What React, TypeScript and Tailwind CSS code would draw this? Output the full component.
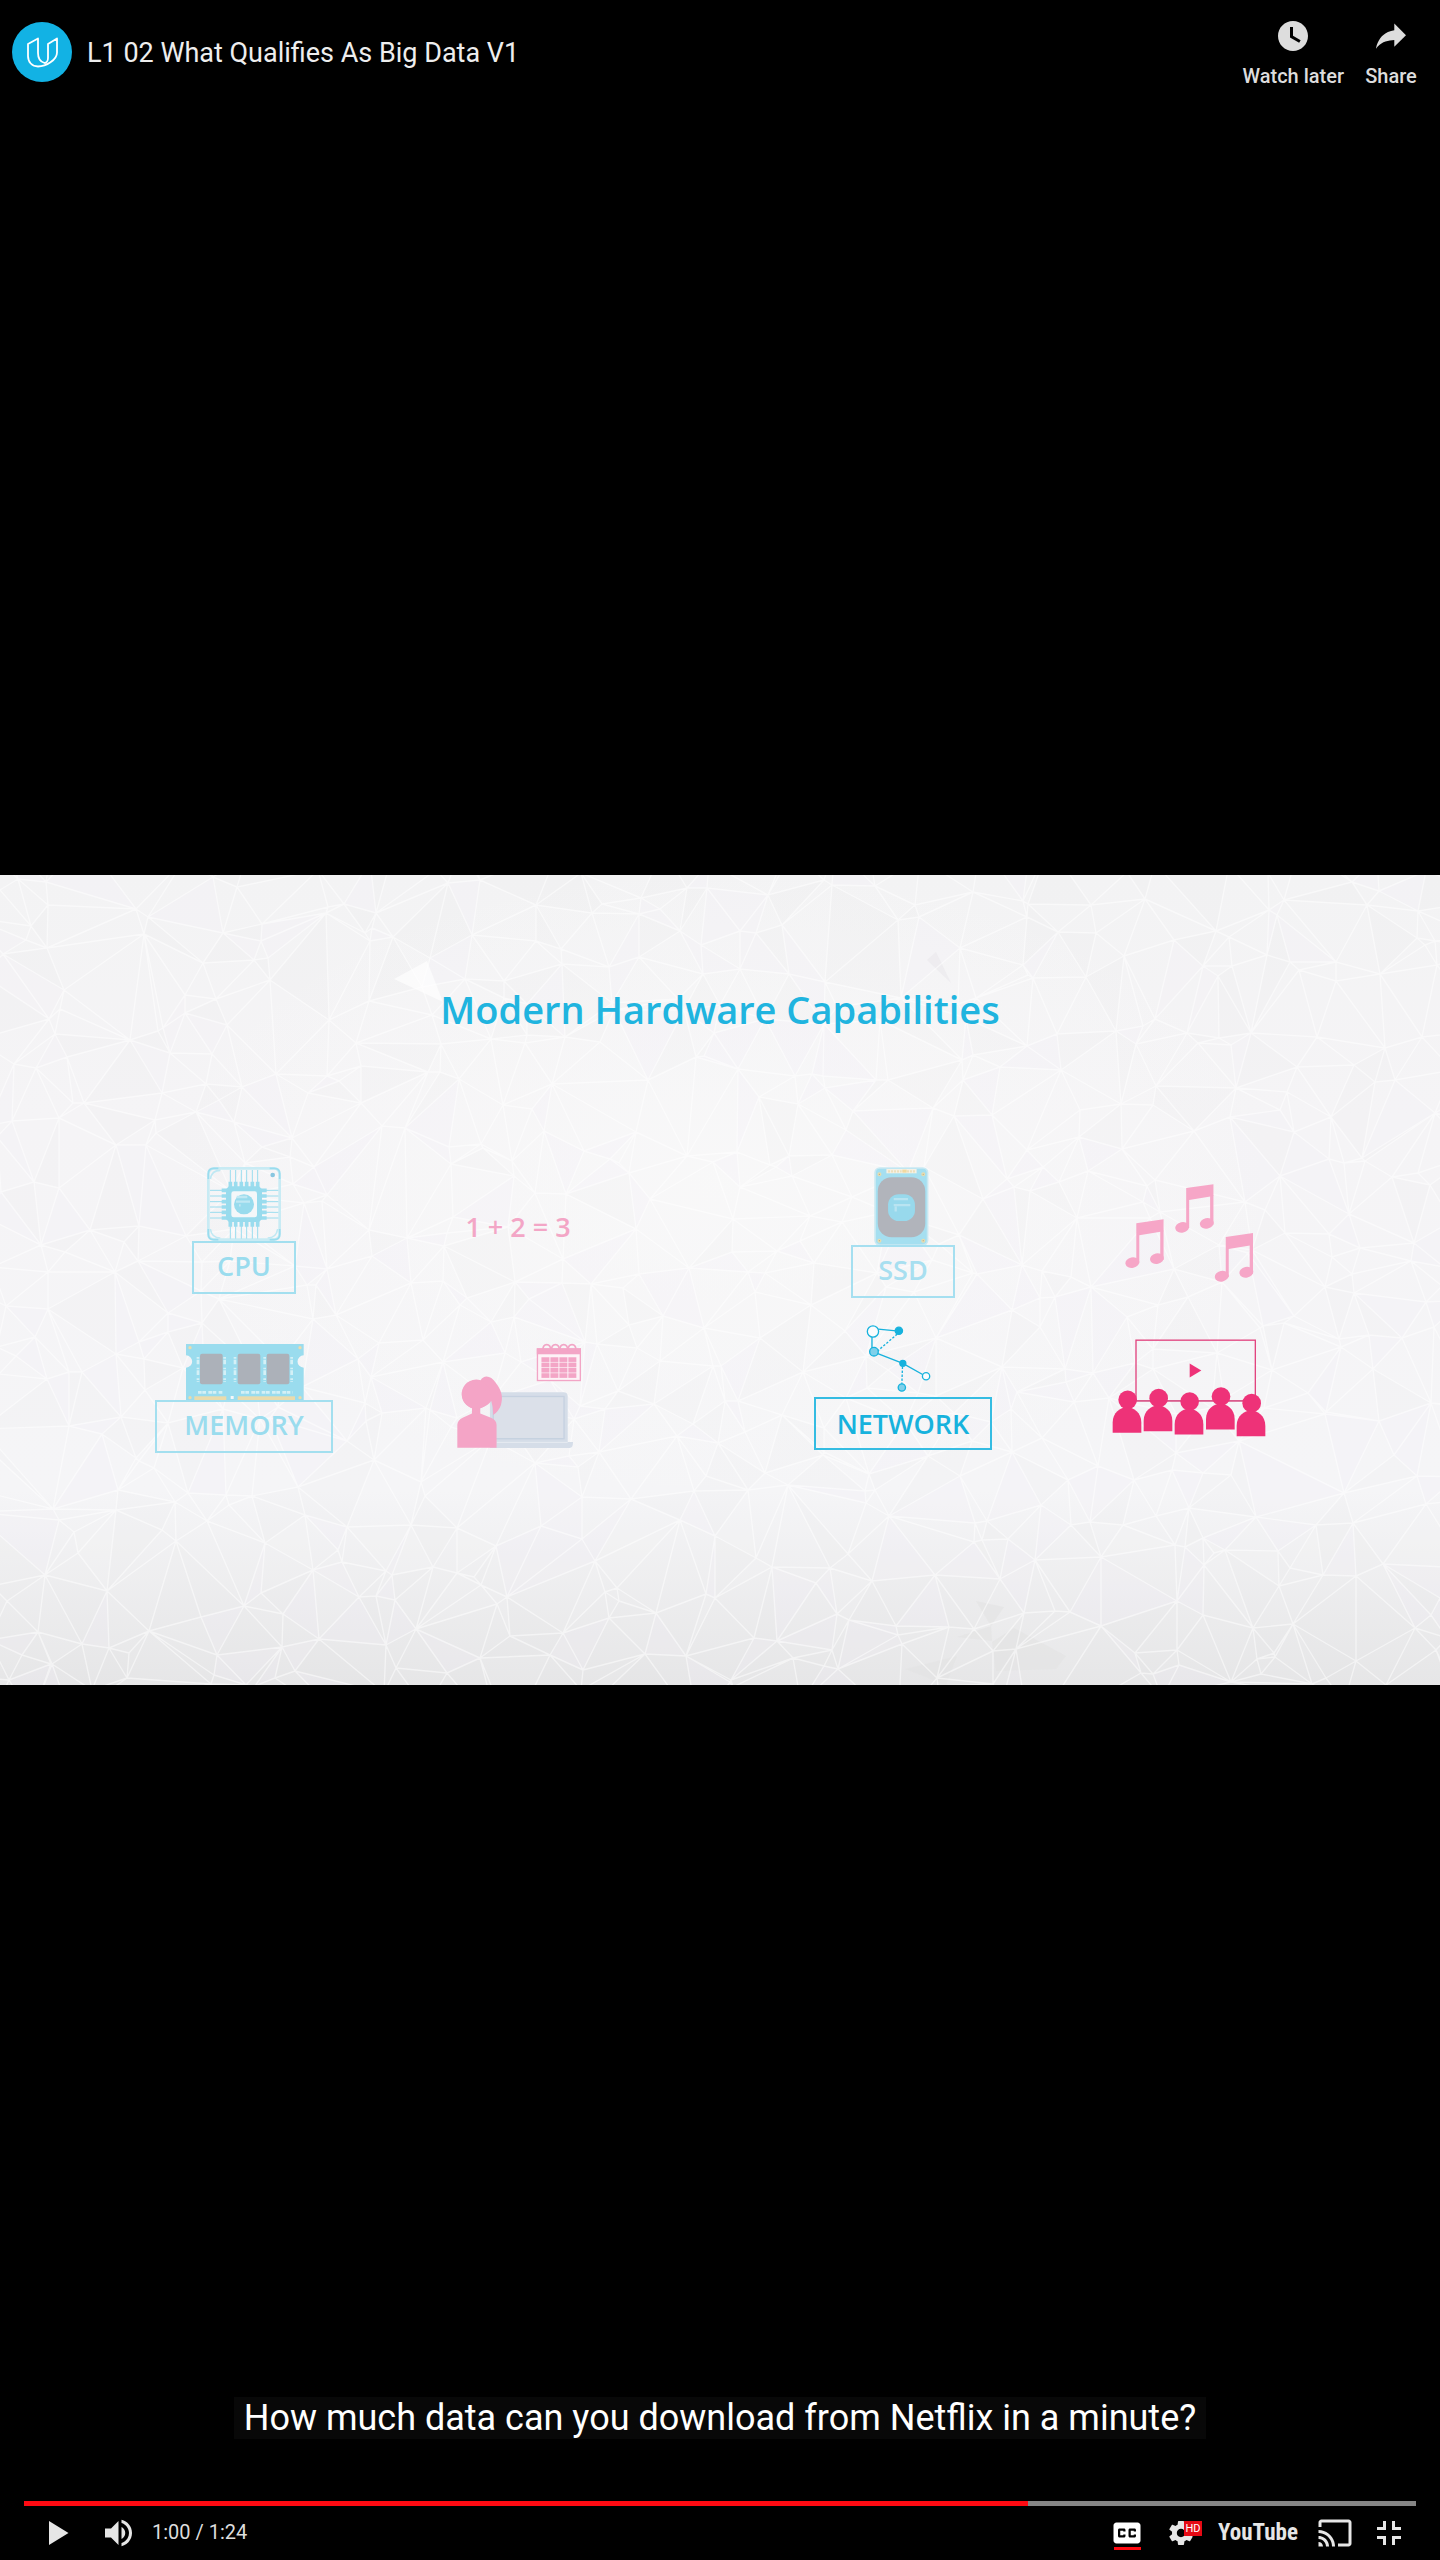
import React from "react";

type Pt = [number, number];
type Tri = [number, number, number];

const SLIDE_W = 1440;
const SLIDE_H = 810;

function makeRandom(seed: number) {
  let s = seed;
  return () => {
    s = (s * 1664525 + 1013904223) % 4294967296;
    return s / 4294967296;
  };
}

/* Bowyer–Watson triangulation */
function triangulate(points: Pt[]): Tri[] {
  const n = points.length;
  const all: Pt[] = [...points, [-9000, -9000], [12000, -9000], [700, 15000]];
  const circle = (t: Tri) => {
    const [ax, ay] = all[t[0]];
    const [bx, by] = all[t[1]];
    const [cx, cy] = all[t[2]];
    const d = 2 * (ax * (by - cy) + bx * (cy - ay) + cx * (ay - by));
    const a2 = ax * ax + ay * ay;
    const b2 = bx * bx + by * by;
    const c2 = cx * cx + cy * cy;
    const x = (a2 * (by - cy) + b2 * (cy - ay) + c2 * (ay - by)) / d;
    const y = (a2 * (cx - bx) + b2 * (ax - cx) + c2 * (bx - ax)) / d;
    return { t, x, y, r: (ax - x) ** 2 + (ay - y) ** 2 };
  };
  let tris = [circle([n, n + 1, n + 2])];
  for (let i = 0; i < n; i++) {
    const [px, py] = all[i];
    const edges = new Map<string, [number, number]>();
    const keep: typeof tris = [];
    for (const c of tris) {
      if ((px - c.x) ** 2 + (py - c.y) ** 2 < c.r) {
        for (let k = 0; k < 3; k++) {
          const a = c.t[k];
          const b = c.t[(k + 1) % 3];
          const key = a < b ? a + "_" + b : b + "_" + a;
          if (edges.has(key)) edges.delete(key);
          else edges.set(key, [a, b]);
        }
      } else keep.push(c);
    }
    edges.forEach(([a, b]) => keep.push(circle([a, b, i])));
    tris = keep;
  }
  return tris.map((c) => c.t).filter((t) => t.every((v) => v < n));
}

function buildMesh() {
  const rnd = makeRandom(77);
  const points: Pt[] = [];
  const step = 41;
  for (let y = -step; y <= SLIDE_H + step; y += step) {
    for (let x = -step; x <= SLIDE_W + step; x += step) {
      points.push([Math.round(x + (rnd() - 0.5) * 84), Math.round(y + (rnd() - 0.5) * 84)]);
    }
  }
  const tris = triangulate(points);
  let lines = "";
  const fills = ["", "", ""];
  for (const t of tris) {
    const d = "M" + t.map((v) => points[v].join(" ")).join("L") + "Z";
    lines += d;
    const pick = Math.floor(rnd() * 6);
    if (pick < 3) fills[pick] += d;
  }
  return { lines, fills };
}

const mesh = buildMesh();

function MeshBackground() {
  return (
    <svg
      className="absolute inset-0 h-full w-full"
      viewBox="0 0 1440 810"
      preserveAspectRatio="xMidYMid slice"
      aria-hidden="true"
    >
      <defs>
        <linearGradient id="floor" x1="0" y1="0" x2="0" y2="1">
          <stop offset="0" stopColor="#f3f3f4" />
          <stop offset="0.3" stopColor="#f5f4f6" />
          <stop offset="0.76" stopColor="#f5f5f7" />
          <stop offset="1" stopColor="#e6e6e7" />
        </linearGradient>
        <radialGradient id="glow" cx="0.5" cy="0.38" r="0.4">
          <stop offset="0" stopColor="#f9f9f9" stopOpacity="0.8" />
          <stop offset="1" stopColor="#f9f9f9" stopOpacity="0" />
        </radialGradient>
      </defs>
      <rect width="1440" height="810" fill="url(#floor)" />
      <rect width="1440" height="810" fill="url(#glow)" />
      <path d={mesh.fills[0]} fill="#f4f0fa" opacity="0.18" />
      <path d={mesh.fills[1]} fill="#e4e4e2" opacity="0.07" />
      <path d={mesh.fills[2]} fill="#ffffff" opacity="0.07" />
      <path d="M394 104L427 86L443 127Z" fill="#fff" opacity="0.65" />
      <path d="M927 85L936 77L951 108Z" fill="#e8e6e9" opacity="0.5" />
      <path d="M976 726L1004 732L991 751Z M957 762L991 751L992 766Z M992 767L1014 753L1066 781L1056 794L996 796Z M905 794L957 781L946 810Z" fill="#e2e2e2" opacity="0.6" />
      <path d={mesh.lines} fill="none" stroke="#fff" strokeWidth="1.4" strokeOpacity="0.5" strokeLinejoin="round" />
    </svg>
  );
}

const range = (n: number) => Array.from({ length: n }, (_, i) => i);

function CpuArt() {
  const offs = [272, 288, 305, 321, 338, 354];
  const rows = [152, 169, 186, 202, 218, 235];
  return (
    <svg width="74" height="74" viewBox="202 82 222 222" fill="none" aria-hidden="true">
      <rect x="206" y="86" width="214" height="214" rx="17" stroke="#c8ebf4" strokeWidth="8" />
      <path
        d="M206 118V102Q206 86 222 86H236M390 86H404Q420 86 420 102V118M206 268V284Q206 300 222 300H236M390 300H404Q420 300 420 284V268"
        stroke="#9adcee"
        strokeWidth="5"
      />
      <path d="M212 118Q216 92 242 92M414 268Q410 295 384 295M212 268Q216 295 242 295" stroke="#bfe8f3" strokeWidth="5" />
      <g stroke="#9adcee">
        {offs.map((x) => (
          <g key={x}>
            <path d={`M${x} 91V130M${x} 256V297`} strokeWidth="3" />
            <path d={`M${x} 126V146M${x} 242V261`} strokeWidth="11" />
          </g>
        ))}
        {rows.map((y) => (
          <g key={y}>
            <path d={`M211 ${y}H250M376 ${y}H416`} strokeWidth="3" />
            <path d={`M246 ${y}H266M362 ${y}H381`} strokeWidth="11" />
          </g>
        ))}
      </g>
      <path d="M268 140H358L367 149V238L358 247H268L259 238V149Z" fill="#98dbed" />
      <rect x="275" y="155" width="77" height="78" rx="7" fill="#f4f7f9" />
      <circle cx="313" cy="194" r="30" fill="#98dbed" />
      <path d="M291 172H323M289 186H331M298 197H303" stroke="#c0e8f3" strokeWidth="7" />
      <circle cx="399" cy="106" r="7" fill="#88c6e0" />
    </svg>
  );
}

function MemoryArt() {
  return (
    <svg width="119" height="56" viewBox="136 611 357 168" aria-hidden="true">
      <path d="M139 611H492V645A18 18 0 0 0 492 682V779H139V682A18 18 0 0 0 139 645Z" fill="#9adcee" />
      <rect x="181" y="640" width="68" height="92" rx="6" fill="#acb1b9" />
      <rect x="294" y="640" width="68" height="92" rx="6" fill="#acb1b9" />
      <rect x="381" y="640" width="68" height="92" rx="6" fill="#acb1b9" />
      <rect x="164" y="768" width="96" height="12" fill="#eadbac" />
      <rect x="294" y="768" width="172" height="12" fill="#eadbac" />
      <rect x="273" y="767" width="9" height="9" fill="#f4f7f9" />
      <g fill="#eadbac">
        <circle cx="151" cy="622" r="5" />
        <circle cx="481" cy="622" r="5" />
        <circle cx="151" cy="772" r="5" />
        <circle cx="481" cy="772" r="5" />
      </g>
      <path
        d="M175 650V724M255 650V724M286 650V724M375 650V724M456 650V724"
        stroke="#d4f0f6"
        strokeWidth="8"
        strokeDasharray="5 3 14 10"
        fill="none"
      />
      <path d="M175 756H249M304 756H460" stroke="#d4f0f6" strokeWidth="8" strokeDasharray="11 2 11 7" fill="none" />
    </svg>
  );
}

function SsdArt() {
  return (
    <svg width="58" height="78" viewBox="222 80 174 235" aria-hidden="true">
      <rect x="225" y="83" width="158" height="232" rx="14" fill="#a5dff0" stroke="#c9e9f2" strokeWidth="5" />
      <rect x="233" y="111" width="143" height="181" rx="42" fill="#b1b4bb" />
      <rect x="264" y="162" width="81" height="81" rx="32" fill="#98d9ec" />
      <path d="M281 177H324M281 195H331M287 199V214" stroke="#b9e4f1" strokeWidth="7" fill="none" />
      <rect x="259" y="86" width="91" height="13" fill="#f4f1e6" />
      <path d="M264 93H305M321 93H346" stroke="#ecdfbc" strokeWidth="7" strokeDasharray="6 3" />
      <rect x="307" y="88" width="13" height="9" fill="#f0d9a0" />
      <g fill="#b9ad8c" stroke="#e7dcae" strokeWidth="4">
        <circle cx="238" cy="102" r="4" />
        <circle cx="370" cy="102" r="4" />
        <circle cx="238" cy="302" r="4" />
        <circle cx="370" cy="302" r="4" />
      </g>
    </svg>
  );
}

function NetworkArt() {
  return (
    <svg width="75" height="69" viewBox="196 550 226 207" fill="none" stroke="#17b2dd" strokeWidth="4" aria-hidden="true">
      <path d="M233 565L295 571M214 588V622M220 634L307 668L376 707" />
      <path d="M290 580L232 630M306 678L304 730" strokeDasharray="7 5" />
      <circle cx="217" cy="572" r="17" fill="#fbfcfd" />
      <circle cx="295" cy="570" r="11" fill="#17b2dd" />
      <circle cx="220" cy="633" r="13" fill="#7fd0ea" />
      <circle cx="307" cy="668" r="9" fill="#17b2dd" />
      <circle cx="377" cy="707" r="11" fill="#fbfcfd" />
      <circle cx="304" cy="741" r="11" fill="#7fd0ea" />
    </svg>
  );
}

function StudentArt() {
  return (
    <svg width="125" height="107" viewBox="78 456 376 320" aria-hidden="true">
      <path d="M182 606H402Q414 606 414 618V756H430Q430 774 420 774H180V610Z" fill="#d5dde8" />
      <rect x="190" y="619" width="213" height="127" fill="#dbe0e9" stroke="#c6d1e0" strokeWidth="4" />
      <path d="M200 757H414" stroke="#e6ebf2" strokeWidth="3" />
      <path
        d="M82 773V704Q83 690 98 683L126 670V654A43 43 0 1 1 152 570C163 552 184 557 197 577C218 604 219 624 213 645Q207 662 190 675Q190 650 184 632Q176 647 151 654V670L185 684Q199 690 200 704V773Z"
        fill="#f4a4c6"
      />
      <circle cx="139" cy="613" r="43" fill="#f4a4c6" />
      <rect x="323" y="476" width="129" height="95" fill="#fdf3f7" stroke="#f2a5c6" strokeWidth="4" />
      <rect x="321" y="474" width="133" height="18" fill="#f3a5c6" />
      {[351, 377, 402, 427].map((x) => (
        <path key={x} d={`M${x - 12} 480C${x - 12} 457 ${x + 12} 457 ${x + 12} 480`} fill="none" stroke="#f2a5c6" strokeWidth="5" />
      ))}
      {range(4).map((r) =>
        range(4).map((c) => (
          <rect key={r + "-" + c} x={335 + c * 27} y={501 + r * 16} width="24" height="14" fill="#f3a5c6" />
        ))
      )}
    </svg>
  );
}

function Note({ x, y }: { x: number; y: number }) {
  return (
    <g transform={`translate(${x} ${y})`}>
      <path d="M32 12L114 0V36L41 48V132H32Z" />
      <path d="M104 34H114V122H104Z" />
      <ellipse cx="20" cy="130" rx="21" ry="16" transform="rotate(-12 20 130)" />
      <ellipse cx="94" cy="118" rx="21" ry="16" transform="rotate(-12 94 118)" />
    </g>
  );
}

function MusicArt() {
  return (
    <svg width="129" height="100" viewBox="102 66 388 300" fill="#f6a6c7" aria-hidden="true">
      <Note x={104} y={175} />
      <Note x={254} y={69} />
      <Note x={373} y={216} />
    </svg>
  );
}

function CinemaArt() {
  const people: Pt[] = [
    [109, 717],
    [202, 712],
    [295, 722],
    [389, 707],
    [481, 727],
  ];
  return (
    <svg width="154" height="99" viewBox="64 532 462 296" fill="#ee3278" aria-hidden="true">
      <rect x="136" y="538" width="358" height="182" fill="none" stroke="#e2447f" strokeWidth="4" />
      <path d="M136 720H494" stroke="#d45b8b" strokeWidth="4" />
      <path d="M297 608L332 629L297 650Z" />
      {people.map(([x, y]) => (
        <g key={x}>
          <circle cx={x + 2} cy={y} r="28" />
          <path d={`M${x - 43} ${y + 99}V${y + 68}C${x - 43} ${y + 38} ${x - 20} ${y + 22} ${x} ${y + 22}C${x + 20} ${y + 22} ${x + 43} ${y + 38} ${x + 43} ${y + 68}V${y + 99}Z`} />
        </g>
      ))}
    </svg>
  );
}

function Label({ children, className }: { children: React.ReactNode; className: string }) {
  return (
    <div className={"flex h-[53px] items-center justify-center border-2 text-[27px] leading-10 font-semibold " + className}>
      {children}
    </div>
  );
}

function Slide() {
  return (
    <section className="relative aspect-video w-full shrink-0 overflow-hidden font-['Open_Sans','Noto_Sans',sans-serif]">
      <MeshBackground />
      <div className="relative pt-[110px]">
        <h2 className="text-center text-[38px] leading-12 font-semibold text-[#20b4df]">Modern Hardware Capabilities</h2>
        <div className="mt-[134px] grid grid-cols-[107fr_274fr_274fr_105fr_286fr_286fr_108fr] items-start justify-items-center gap-y-[26px]">
          <div className="col-start-2 flex h-[130px] flex-col items-center">
            <CpuArt />
            <Label className="w-[104px] border-[#a3dfef] pb-1 text-[#9adcee]">CPU</Label>
          </div>
          <p className="col-start-3 mt-10 text-[27px] leading-10 font-semibold text-[#f3a6c6]">1 + 2 = 3</p>
          <div className="col-start-5 flex flex-col items-center">
            <SsdArt />
            <Label className="w-[104px] border-[#a5dff0] pb-1 text-[#a8dff0]">SSD</Label>
          </div>
          <div className="col-start-6 mt-4">
            <MusicArt />
          </div>
          <div className="col-start-2 mt-5 flex flex-col items-center">
            <MemoryArt />
            <Label className="w-[178px] border-[#a3dfef] pb-1 text-[#9adcee]">MEMORY</Label>
          </div>
          <div className="col-start-3 mt-[18px]">
            <StudentArt />
          </div>
          <div className="col-start-5 flex flex-col items-center gap-1">
            <NetworkArt />
            <Label className="w-[178px] border-[#35bce2] text-[#17b2dd]">NETWORK</Label>
          </div>
          <div className="col-start-6 mt-3.5">
            <CinemaArt />
          </div>
        </div>
      </div>
    </section>
  );
}

function PlayerIcon({ children }: { children: React.ReactNode }) {
  return (
    <svg width="54" height="54" viewBox="0 0 36 36" fill="currentColor" fillRule="evenodd" aria-hidden="true">
      {children}
    </svg>
  );
}

function TopBar() {
  return (
    <header className="flex items-start justify-between pr-6 pl-3">
      <a href="#video" className="flex items-center gap-[15px] pt-[22px] text-[#eee]">
        <svg width="60" height="60" viewBox="0 0 60 60" fill="none" aria-hidden="true">
          <circle cx="30" cy="30" r="30" fill="#12b2e4" />
          <path
            d="M26 16.500L16 22V34C16 40 20 44.500 26 44.500C34 44.500 45 38 45 30.500V16.500L36 22V36C36 38.500 34.500 41 32.500 41C29 40 26 37 26 31Z"
            stroke="#fff"
            strokeWidth="1.8"
            strokeLinejoin="round"
          />
        </svg>
        <h1 className="pt-0.5 text-[27px] leading-8">L1 02 What Qualifies As Big Data V1</h1>
      </a>
      <div className="flex gap-[22px] pt-[9px] text-xl leading-6 font-medium text-[#ddd]">
        <button className="flex flex-col items-center gap-px">
          <PlayerIcon>
            <path d="M18,8 C12.47,8 8,12.47 8,18 C8,23.52 12.47,28 18,28 C23.52,28 28,23.52 28,18 C28,12.47 23.52,8 18,8 L18,8 Z M16,19.02 L16,12.00 L18,12.00 L18,17.86 L23.10,20.81 L22.10,22.54 L16,19.02 Z" />
          </PlayerIcon>
          <span>Watch later</span>
        </button>
        <button className="flex w-[50px] flex-col items-center gap-px">
          <PlayerIcon>
            <path d="m 20.20,14.19 0,-4.45 7.79,7.79 -7.79,7.62 0,-4.56 C 16.27,20.69 12.10,21.81 9.34,24.76 8.80,25.13 7.60,27.29 8.12,25.65 9.08,21.32 11.80,17.18 15.98,15.38 c 1.33,-0.60 2.76,-0.98 4.21,-1.19 z" />
          </PlayerIcon>
          <span>Share</span>
        </button>
      </div>
    </header>
  );
}

function Controls() {
  return (
    <div className="px-6">
      <input
        type="range"
        aria-label="Seek"
        min={0}
        max={84}
        defaultValue={60}
        className="block h-[5px] w-full appearance-none bg-[linear-gradient(to_right,#ff0a12_72.1%,#858585_72.1%)] [&::-webkit-slider-thumb]:h-0 [&::-webkit-slider-thumb]:w-0 [&::-webkit-slider-thumb]:appearance-none"
      />
      <div className="flex items-center justify-between text-[#e6e6e6]">
        <div className="flex items-center pl-[7px]">
          <button aria-label="Play" className="mr-2">
            <PlayerIcon>
              <path d="M12 10L25 18L12 26Z" />
            </PlayerIcon>
          </button>
          <button aria-label="Mute" className="mr-[5px]">
            <PlayerIcon>
              <path d="M8,21 L12,21 L17,26 L17,10 L12,15 L8,15 L8,21 Z M19,14 L19,22 C20.48,21.32 21.5,19.77 21.5,18 C21.5,16.26 20.48,14.74 19,14 Z M19,9.23 L19,11.29 C21.89,12.15 24,14.83 24,18 C24,21.17 21.89,23.85 19,24.71 L19,26.77 C23.01,25.86 26,22.28 26,18 C26,13.72 23.01,10.14 19,9.23 Z" />
            </PlayerIcon>
          </button>
          <span className="pb-0.5 text-xl leading-6 whitespace-nowrap text-[#ddd]">1:00 / 1:24</span>
        </div>
        <div className="flex items-center">
          <button aria-label="Subtitles" className="relative text-white">
            <PlayerIcon>
              <path d="M11,11 C9.89,11 9,11.9 9,13 L9,23 C9,24.1 9.89,25 11,25 L25,25 C26.1,25 27,24.1 27,23 L27,13 C27,11.9 26.1,11 25,11 Z M17,17 L15.5,17 L15.5,16.5 L13.5,16.5 L13.5,19.5 L15.5,19.5 L15.5,19 L17,19 L17,20 C17,20.55 16.55,21 16,21 L13,21 C12.45,21 12,20.55 12,20 L12,16 C12,15.45 12.45,15 13,15 L16,15 C16.55,15 17,15.45 17,16 Z M24,17 L22.5,17 L22.5,16.5 L20.5,16.5 L20.5,19.5 L22.5,19.5 L22.5,19 L24,19 L24,20 C24,20.55 23.55,21 23,21 L20,21 C19.45,21 19,20.55 19,20 L19,16 C19,15.45 19.45,15 20,15 L23,15 C23.55,15 24,15.45 24,16 Z" />
            </PlayerIcon>
            <span className="absolute bottom-[10px] left-[14px] h-[3px] w-[27px] bg-[#ff0a12]" />
          </button>
          <button aria-label="Settings" className="relative">
            <PlayerIcon>
              <path d="m 23.94,18.78 c .03,-0.25 .05,-0.51 .05,-0.78 0,-0.27 -0.02,-0.52 -0.05,-0.78 l 1.68,-1.32 c .15,-0.12 .19,-0.33 .09,-0.51 l -1.6,-2.76 c -0.09,-0.17 -0.31,-0.24 -0.48,-0.17 l -1.99,.8 c -0.41,-0.32 -0.86,-0.58 -1.35,-0.78 l -0.30,-2.12 c -0.02,-0.19 -0.19,-0.33 -0.39,-0.33 l -3.2,0 c -0.2,0 -0.36,.14 -0.39,.33 l -0.30,2.12 c -0.48,.2 -0.93,.47 -1.35,.78 l -1.99,-0.8 c -0.18,-0.07 -0.39,0 -0.48,.17 l -1.6,2.76 c -0.10,.17 -0.05,.39 .09,.51 l 1.68,1.32 c -0.03,.25 -0.05,.52 -0.05,.78 0,.26 .02,.52 .05,.78 l -1.68,1.32 c -0.15,.12 -0.19,.33 -0.09,.51 l 1.6,2.76 c .09,.17 .31,.24 .48,.17 l 1.99,-0.8 c .41,.32 .86,.58 1.35,.78 l .30,2.12 c .02,.19 .19,.33 .39,.33 l 3.2,0 c .2,0 .36,-0.14 .39,-0.33 l .30,-2.12 c .48,-0.2 .93,-0.47 1.35,-0.78 l 1.99,.8 c .18,.07 .39,0 .48,-0.17 l 1.6,-2.76 c .09,-0.17 .05,-0.39 -0.09,-0.51 l -1.68,-1.32 z m -5.94,2.01 c -1.54,0 -2.8,-1.25 -2.8,-2.8 0,-1.54 1.25,-2.8 2.8,-2.8 1.54,0 2.8,1.25 2.8,2.8 0,1.54 -1.25,2.8 -2.8,2.8 z" />
            </PlayerIcon>
            <span className="absolute top-[15px] left-[30px] h-[15px] w-[18px] bg-[#e50914] text-center text-[11px] leading-[15px] text-white">HD</span>
          </button>
          <a href="#youtube" className="w-[100px] text-center font-['Liberation_Sans_Narrow','Roboto_Condensed','Roboto',sans-serif] text-[23px] leading-8 font-bold">
            YouTube
          </a>
          <button aria-label="Play on TV">
            <PlayerIcon>
              <path d="M27,9 L9,9 C7.9,9 7,9.9 7,11 L7,14 L9,14 L9,11 L27,11 L27,25 L20,25 L20,27 L27,27 C28.1,27 29,26.1 29,25 L29,11 C29,9.9 28.1,9 27,9 Z M7,24 L7,27 L10,27 C10,25.34 8.66,24 7,24 Z M7,20 L7,22 C9.76,22 12,24.24 12,27 L14,27 C14,23.13 10.87,20 7,20 Z M7,16 L7,18 C11.97,18 16,22.03 16,27 L18,27 C18,20.92 13.07,16 7,16 Z" />
            </PlayerIcon>
          </button>
          <button aria-label="Exit full screen">
            <PlayerIcon>
              <path d="M14 14H10V16H16V10H14Z M22 14V10H20V16H26V14Z M20 26H22V22H26V20H20Z M10 22H14V26H16V20H10Z" />
            </PlayerIcon>
          </button>
        </div>
      </div>
    </div>
  );
}

export default function App() {
  return (
    <main className="flex min-h-screen flex-col bg-black font-['Roboto',sans-serif]">
      <div className="flex-1 basis-0">
        <TopBar />
      </div>
      <Slide />
      <div className="flex flex-1 basis-0 flex-col justify-end">
        <p className="mx-auto mb-[62px] bg-[#080808] px-[10px] text-[36px] leading-[42px] text-white">
          How much data can you download from Netflix in a minute?
        </p>
        <Controls />
      </div>
    </main>
  );
}
